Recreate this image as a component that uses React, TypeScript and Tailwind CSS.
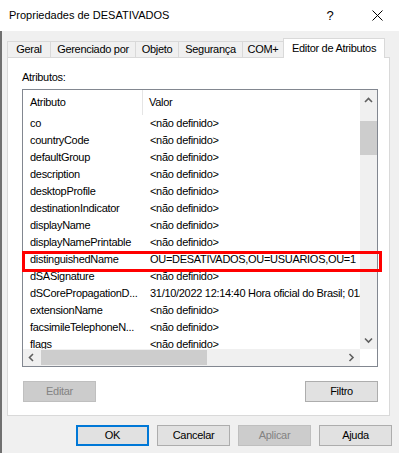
import React from 'react';

const rows: [string, string][] = [
  ['co', '<não definido>'],
  ['countryCode', '<não definido>'],
  ['defaultGroup', '<não definido>'],
  ['description', '<não definido>'],
  ['desktopProfile', '<não definido>'],
  ['destinationIndicator', '<não definido>'],
  ['displayName', '<não definido>'],
  ['displayNamePrintable', '<não definido>'],
  ['distinguishedName', 'OU=DESATIVADOS,OU=USUARIOS,OU=1'],
  ['dSASignature', '<não definido>'],
  ['dSCorePropagationD...', '31/10/2022 12:14:40 Hora oficial do Brasil; 01/01/1601 00:00:00'],
  ['extensionName', '<não definido>'],
  ['facsimileTelephoneN...', '<não definido>'],
  ['flags', '<não definido>'],
];

const tabs = [
  { label: 'Geral', w: 'w-[43px]' },
  { label: 'Gerenciado por', w: 'w-[85px]' },
  { label: 'Objeto', w: 'w-[43px]' },
  { label: 'Segurança', w: 'w-[64px]' },
  { label: 'COM+', w: 'w-[41px]' },
];

function Chevron({ dir }: { dir: 'up' | 'down' | 'left' | 'right' }) {
  const pts = {
    up: '1,5 4.5,1.5 8,5',
    down: '1,1.5 4.5,5 8,1.5',
    left: '5,1 1.5,4.5 5,8',
    right: '1.5,1 5,4.5 1.5,8',
  }[dir];
  const vertical = dir === 'up' || dir === 'down';
  return (
    <svg width={vertical ? 9 : 7} height={vertical ? 7 : 9} viewBox={vertical ? '0 0 9 7' : '0 0 7 9'}>
      <polyline points={pts} fill="none" stroke="#606060" strokeWidth="1.6" />
    </svg>
  );
}

function Btn({ children, disabled, focused }: { children: React.ReactNode; disabled?: boolean; focused?: boolean }) {
  return (
    <div
      className={
        'w-[73px] h-[21px] flex items-center justify-center ' +
        (disabled
          ? 'bg-[#cccccc] border border-[#bfbfbf] text-[#838383]'
          : focused
          ? 'bg-[#e1e1e1] border-2 border-[#0078d7]'
          : 'bg-[#e1e1e1] border border-[#adadad]')
      }
    >
      {children}
    </div>
  );
}

export default function App() {
  return (
    <div className="w-[399px] h-[453px] bg-[#f0f0f0] flex flex-col overflow-hidden text-[11px] tracking-[-0.3px] text-black font-['Liberation_Sans',Arial,sans-serif]">
      {/* title bar */}
      <div className="h-[31px] bg-white flex items-center pl-[9px] tracking-normal shrink-0">
        <span className="flex-1">Propriedades de DESATIVADOS</span>
        <span className="text-[13px] w-[12px] mr-[36px] text-center">?</span>
        <svg width="11" height="11" viewBox="0 0 11 11" className="mr-[16px]">
          <path d="M0.5 0.5 L10.5 10.5 M10.5 0.5 L0.5 10.5" stroke="#000" strokeWidth="1" />
        </svg>
      </div>

      <div className="flex-1 flex flex-col border-l-2 border-[#707070]">
        <div className="pl-[5px] pt-[7px]">
          {/* tabs */}
          <div className="h-[20px] flex items-end relative z-10">
            {tabs.map((t, i) => (
              <div
                key={t.label}
                className={
                  t.w +
                  ' h-[17px] flex items-center justify-center bg-[#f0f0f0] border-t border-l border-b border-[#d9d9d9] ' +
                  (i === tabs.length - 1 ? 'border-r-0' : '')
                }
              >
                {t.label}
              </div>
            ))}
            <div className="w-[102px] h-[20px] flex items-center justify-center bg-white border-t border-l border-r border-[#d9d9d9] pb-[1px]">
              Editor de Atributos
            </div>
          </div>

          {/* panel */}
          <div className="w-[383px] h-[359px] -mt-px bg-white border border-[#d9d9d9] px-[14px] pt-[13px]">
            <div className="h-[13px] leading-[13px]">Atributos:</div>

            <div className="relative mt-[5px] w-[356px] h-[278px] border border-[#828790] grid grid-cols-[1fr_17px] grid-rows-[1fr_17px]">
              {/* list content */}
              <div className="overflow-hidden">
                <div className="h-[25px] flex items-center">
                  <div className="w-[120px] h-full flex items-center pl-[7px] border-r border-[#e5e5e5]">Atributo</div>
                  <div className="pl-[6px]">Valor</div>
                </div>
                {rows.map(([a, v]) => (
                  <div key={a} className="h-[17px] flex items-center whitespace-nowrap">
                    <div className="w-[120px] shrink-0 pl-[7px] overflow-hidden">{a}</div>
                    <div className="pl-[7px] overflow-hidden">{v}</div>
                  </div>
                ))}
              </div>

              {/* vertical scrollbar */}
              <div className="bg-[#f0f0f0] flex flex-col">
                <div className="h-[17px] flex items-center justify-center pt-[3px]">
                  <Chevron dir="up" />
                </div>
                <div className="h-[14px]" />
                <div className="h-[34px] bg-[#cdcdcd]" />
                <div className="flex-1" />
                <div className="h-[17px] flex items-center justify-center">
                  <Chevron dir="down" />
                </div>
              </div>

              {/* horizontal scrollbar */}
              <div className="bg-[#f0f0f0] flex items-stretch">
                <div className="w-[17px] flex items-center justify-center">
                  <Chevron dir="left" />
                </div>
                <div className="ml-[1px] w-[166px] my-[1px] bg-[#cdcdcd]" />
                <div className="flex-1" />
                <div className="w-[17px] flex items-center justify-center">
                  <Chevron dir="right" />
                </div>
              </div>
              <div className="bg-white" />

              {/* highlight annotation */}
              <div className="absolute left-[-1px] top-[161px] w-[360px] h-[21px] border-[3px] border-[#ff0000]" />
            </div>

            <div className="mt-[14px] pl-[1px] flex justify-between w-[356px]">
              <Btn disabled>Editar</Btn>
              <Btn>Filtro</Btn>
            </div>
          </div>
        </div>

        {/* dialog buttons */}
        <div className="mt-[9px] pr-[7px] flex justify-end gap-[8px]">
          <Btn focused>OK</Btn>
          <Btn>Cancelar</Btn>
          <Btn disabled>Aplicar</Btn>
          <Btn>Ajuda</Btn>
        </div>
      </div>
    </div>
  );
}
